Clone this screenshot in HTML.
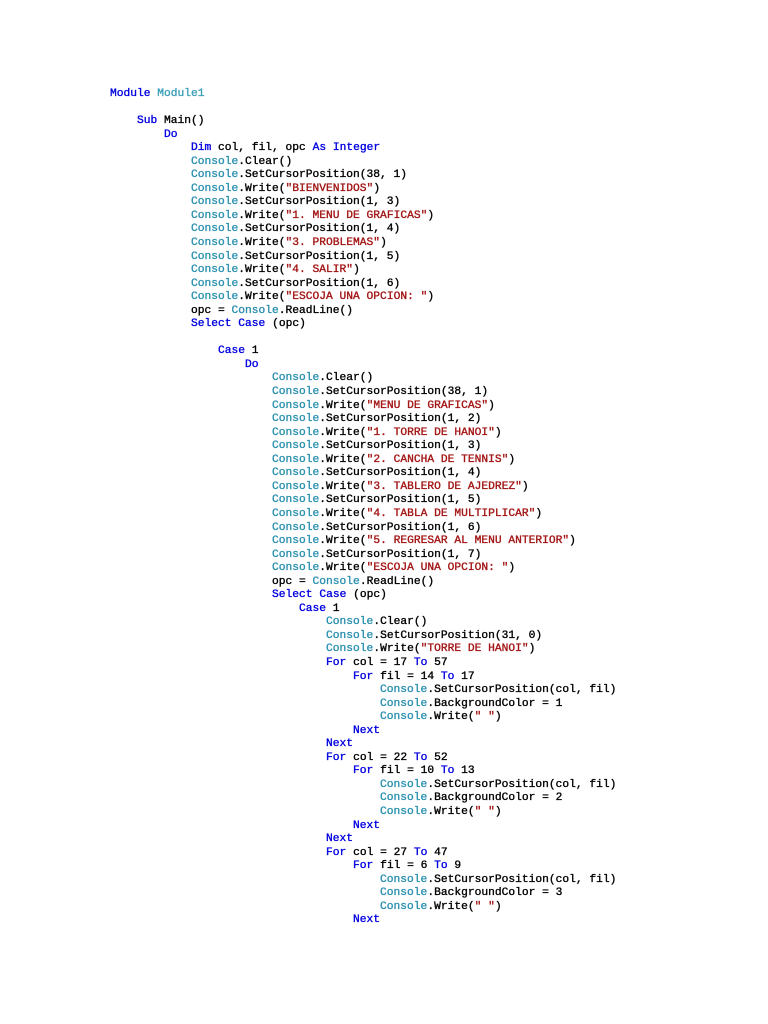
<!DOCTYPE html>
<html><head><meta charset="utf-8"><style>
html,body{margin:0;padding:0;background:#fff;width:768px;height:1024px;overflow:hidden}
pre{position:absolute;left:110px;top:88px;margin:0;font-family:"Liberation Mono",monospace;font-size:11.25px;line-height:13.54px;color:#000;-webkit-text-stroke:0.35px currentColor;}
.k{color:#0000e0}.c{color:#2b91af}.m{color:#3ca0b8}.s{color:#a31515}
</style></head><body>
<pre><span class="k">Module</span> <span class="m">Module1</span>

    <span class="k">Sub</span> Main()
        <span class="k">Do</span>
            <span class="k">Dim</span> col, fil, opc <span class="k">As</span> <span class="k">Integer</span>
            <span class="c">Console</span>.Clear()
            <span class="c">Console</span>.SetCursorPosition(38, 1)
            <span class="c">Console</span>.Write(<span class="s">"BIENVENIDOS"</span>)
            <span class="c">Console</span>.SetCursorPosition(1, 3)
            <span class="c">Console</span>.Write(<span class="s">"1. MENU DE GRAFICAS"</span>)
            <span class="c">Console</span>.SetCursorPosition(1, 4)
            <span class="c">Console</span>.Write(<span class="s">"3. PROBLEMAS"</span>)
            <span class="c">Console</span>.SetCursorPosition(1, 5)
            <span class="c">Console</span>.Write(<span class="s">"4. SALIR"</span>)
            <span class="c">Console</span>.SetCursorPosition(1, 6)
            <span class="c">Console</span>.Write(<span class="s">"ESCOJA UNA OPCION: "</span>)
            opc = <span class="c">Console</span>.ReadLine()
            <span class="k">Select</span> <span class="k">Case</span> (opc)

                <span class="k">Case</span> 1
                    <span class="k">Do</span>
                        <span class="c">Console</span>.Clear()
                        <span class="c">Console</span>.SetCursorPosition(38, 1)
                        <span class="c">Console</span>.Write(<span class="s">"MENU DE GRAFICAS"</span>)
                        <span class="c">Console</span>.SetCursorPosition(1, 2)
                        <span class="c">Console</span>.Write(<span class="s">"1. TORRE DE HANOI"</span>)
                        <span class="c">Console</span>.SetCursorPosition(1, 3)
                        <span class="c">Console</span>.Write(<span class="s">"2. CANCHA DE TENNIS"</span>)
                        <span class="c">Console</span>.SetCursorPosition(1, 4)
                        <span class="c">Console</span>.Write(<span class="s">"3. TABLERO DE AJEDREZ"</span>)
                        <span class="c">Console</span>.SetCursorPosition(1, 5)
                        <span class="c">Console</span>.Write(<span class="s">"4. TABLA DE MULTIPLICAR"</span>)
                        <span class="c">Console</span>.SetCursorPosition(1, 6)
                        <span class="c">Console</span>.Write(<span class="s">"5. REGRESAR AL MENU ANTERIOR"</span>)
                        <span class="c">Console</span>.SetCursorPosition(1, 7)
                        <span class="c">Console</span>.Write(<span class="s">"ESCOJA UNA OPCION: "</span>)
                        opc = <span class="c">Console</span>.ReadLine()
                        <span class="k">Select</span> <span class="k">Case</span> (opc)
                            <span class="k">Case</span> 1
                                <span class="c">Console</span>.Clear()
                                <span class="c">Console</span>.SetCursorPosition(31, 0)
                                <span class="c">Console</span>.Write(<span class="s">"TORRE DE HANOI"</span>)
                                <span class="k">For</span> col = 17 <span class="k">To</span> 57
                                    <span class="k">For</span> fil = 14 <span class="k">To</span> 17
                                        <span class="c">Console</span>.SetCursorPosition(col, fil)
                                        <span class="c">Console</span>.BackgroundColor = 1
                                        <span class="c">Console</span>.Write(<span class="s">" "</span>)
                                    <span class="k">Next</span>
                                <span class="k">Next</span>
                                <span class="k">For</span> col = 22 <span class="k">To</span> 52
                                    <span class="k">For</span> fil = 10 <span class="k">To</span> 13
                                        <span class="c">Console</span>.SetCursorPosition(col, fil)
                                        <span class="c">Console</span>.BackgroundColor = 2
                                        <span class="c">Console</span>.Write(<span class="s">" "</span>)
                                    <span class="k">Next</span>
                                <span class="k">Next</span>
                                <span class="k">For</span> col = 27 <span class="k">To</span> 47
                                    <span class="k">For</span> fil = 6 <span class="k">To</span> 9
                                        <span class="c">Console</span>.SetCursorPosition(col, fil)
                                        <span class="c">Console</span>.BackgroundColor = 3
                                        <span class="c">Console</span>.Write(<span class="s">" "</span>)
                                    <span class="k">Next</span></pre>
</body></html>
